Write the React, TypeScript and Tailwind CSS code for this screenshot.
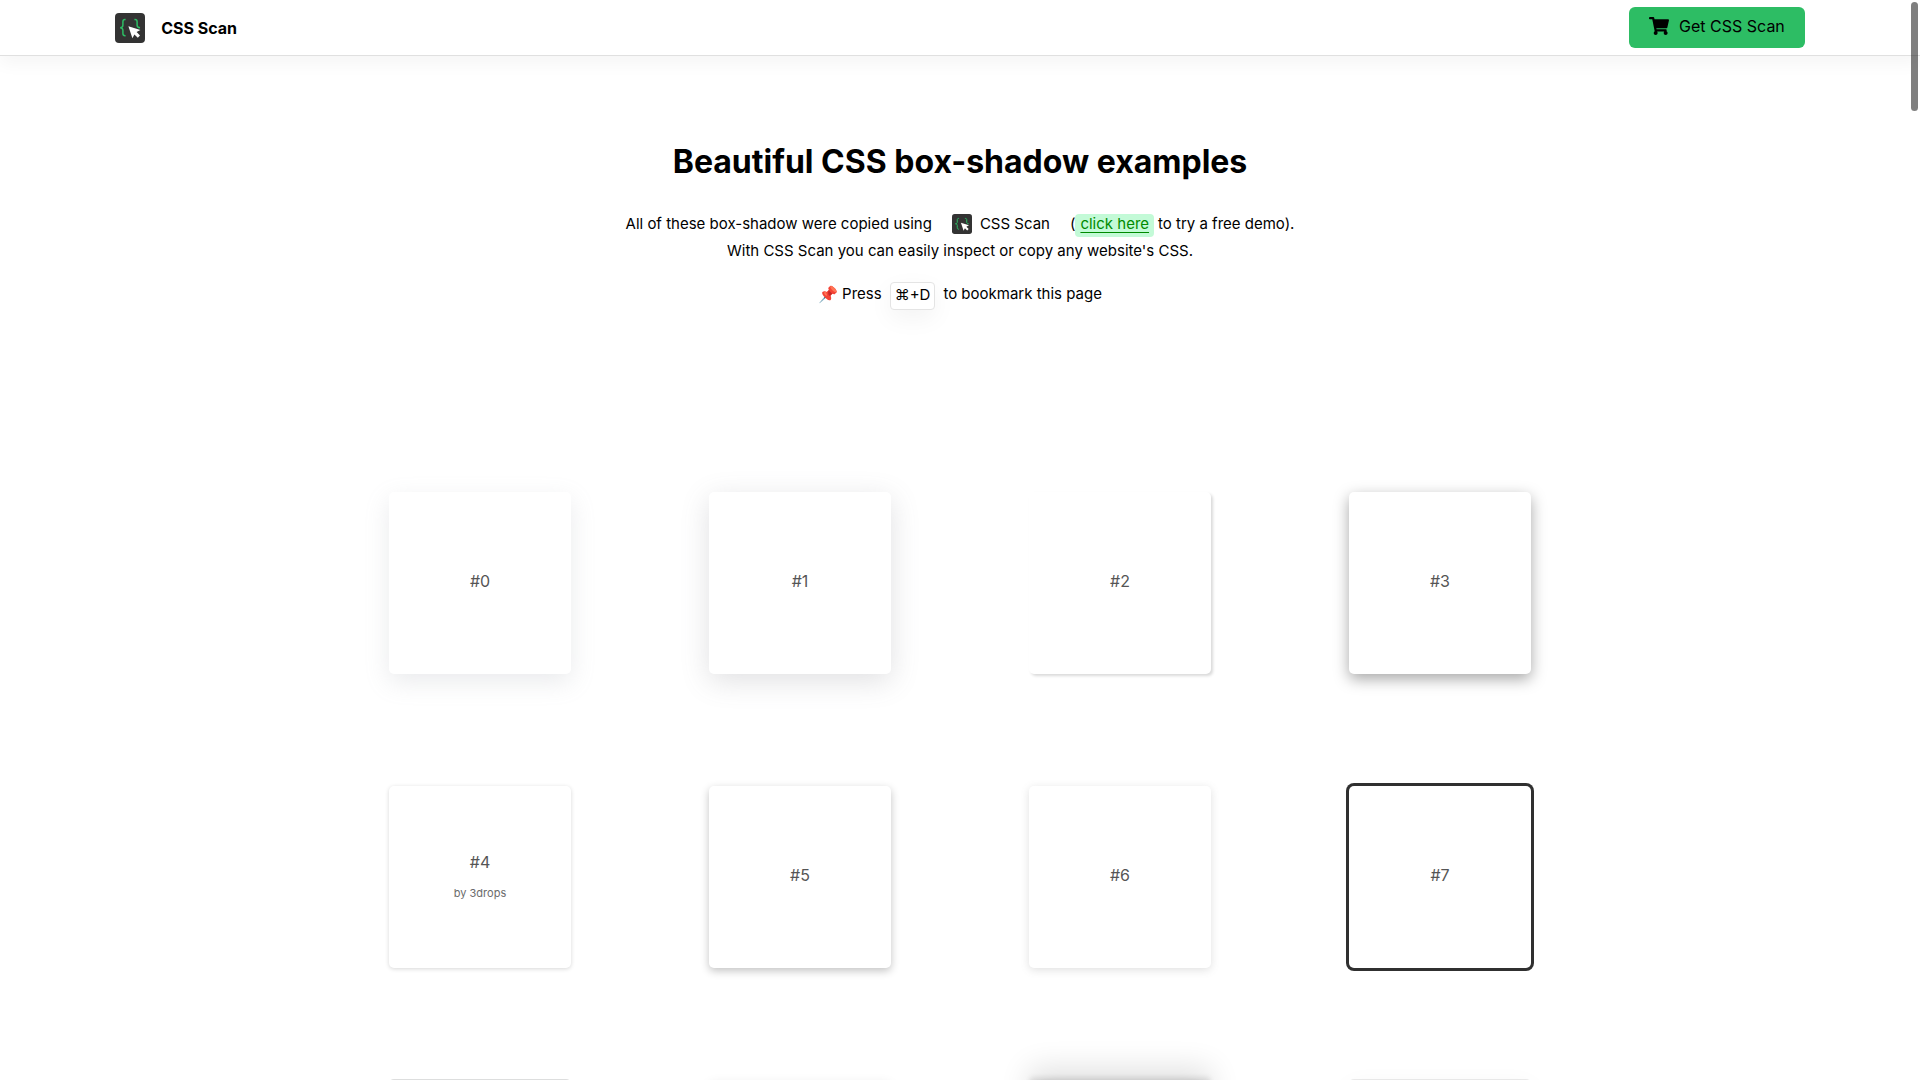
import { FaShoppingCart } from "react-icons/fa";

type Sample = { shadow: string; label?: string; credit?: string };

const samples: Sample[] = [
  { label: "#0", shadow: "shadow-[0px_8px_24px_rgba(149,157,165,0.2)]" },
  { label: "#1", shadow: "shadow-[0px_7px_29px_0px_rgba(100,100,111,0.2)]" },
  { label: "#2", shadow: "shadow-[2px_2px_3px_rgba(0,0,0,0.15)]" },
  { label: "#3", shadow: "shadow-[0px_5px_15px_rgba(0,0,0,0.35)]" },
  { label: "#4", shadow: "shadow-[0px_1px_4px_rgba(0,0,0,0.16)]", credit: "by 3drops" },
  { label: "#5", shadow: "shadow-[0px_3px_8px_rgba(0,0,0,0.24)]" },
  { label: "#6", shadow: "shadow-[0px_2px_8px_0px_rgba(99,99,99,0.2)]" },
  { label: "#7", shadow: "shadow-[0px_0px_0px_3px_rgb(48,48,48)]" },
  { shadow: "shadow-[0px_1px_3px_0px_rgba(0,0,0,0.02),0px_0px_0px_1px_rgba(27,31,35,0.15)]" },
  { shadow: "shadow-[0px_4px_12px_rgba(0,0,0,0.1)]" },
  {
    shadow:
      "shadow-[0px_54px_55px_rgba(0,0,0,0.25),0px_-12px_30px_rgba(0,0,0,0.12),0px_4px_6px_rgba(0,0,0,0.12),0px_12px_13px_rgba(0,0,0,0.17),0px_-3px_5px_rgba(0,0,0,0.09)]",
  },
  { shadow: "shadow-[0px_6px_24px_0px_rgba(0,0,0,0.05),0px_0px_0px_1px_rgba(0,0,0,0.08)]" },
];

function Logo({ className }: { className: string }) {
  return (
    <svg viewBox="0 0 30 30" className={className} aria-hidden="true">
      <rect width="30" height="30" rx="4" fill="#333333" />
      <g fill="none" stroke="#2dbd64" strokeWidth="1.5">
        <path d="M10.6 6.6H10C8.4 6.6 7.9 7.5 7.9 8.8v3.4c0 1.4-.8 2.3-2.7 2.5 1.9.2 2.7 1.1 2.7 2.5v3.4c0 1.3.5 2.2 2.1 2.2h.6" />
        <path d="M19.4 6.6h.6c1.6 0 2.1.9 2.1 2.2v3.4c0 1.4.8 2.3 2.9 2.5" />
      </g>
      <path d="M13.4 13.2 25.4 16.9 21.6 19.1 25 22.6 22.8 24.8 19.4 21.4 17.4 25.2Z" fill="#ffffff" />
    </svg>
  );
}

function Header() {
  return (
    <header className="flex h-14 items-center justify-between border-b border-[#e0e0e0] bg-white px-[6%] shadow-[0px_8px_16px_rgba(0,0,0,0.04)]">
      <a href="#home" className="flex items-center gap-4 text-base font-bold">
        <Logo className="size-[30px]" />
        CSS Scan
      </a>
      <button className="flex h-[41px] items-center gap-2.5 rounded-md bg-[#2dbd64] px-5 pb-1 text-base">
        <FaShoppingCart className="h-[18px] w-5" aria-hidden="true" />
        Get CSS Scan
      </button>
    </header>
  );
}

function Intro() {
  return (
    <section className="flex flex-col items-center px-4 pt-[86px] text-center leading-[27px]">
      <h1 className="text-[32px] leading-10 font-bold">Beautiful CSS box-shadow examples</h1>
      <p className="mt-7">
        <span className="flex items-center justify-center">
          All of these box-shadow were copied using
          <a href="#css-scan" className="mx-5 flex items-center gap-2">
            <Logo className="size-5" />
            CSS Scan
          </a>
          (
          <a
            href="#demo"
            className="mt-1 mr-1 rounded bg-[#c3fad7] px-[5px] pb-1 leading-[19px] text-[#008a00] underline underline-offset-3"
          >
            click here
          </a>
          to try a free demo).
        </span>
        With CSS Scan you can easily inspect or copy any website's CSS.
      </p>
      <p className="mt-[18px] flex items-start leading-6">
        <span className="mr-1 text-base leading-6">📌</span>
        Press
        <kbd className="mx-2 flex h-7 items-start rounded border border-[#e4e4e4] bg-white px-1 font-[Inter,sans-serif] shadow-[0px_8px_24px_rgba(0,0,0,0.05)]">
          ⌘+D
        </kbd>
        to bookmark this page
      </p>
    </section>
  );
}

function ShadowCard({ index, sample }: { index: number; sample: Sample }) {
  return (
    <button
      aria-label={`Copy box-shadow ${index}`}
      className={`flex size-[182px] flex-col items-center justify-center gap-[11px] rounded-[5px] bg-white pb-1 text-base leading-6 text-[#555555] ${sample.shadow}`}
    >
      {sample.label && <span>{sample.label}</span>}
      {sample.credit && <span className="text-[11px] leading-4 text-[#6b6b6b]">{sample.credit}</span>}
    </button>
  );
}

export default function App() {
  return (
    <div className="h-screen overflow-hidden bg-white font-[Inter,sans-serif] text-[15px] text-black">
      <Header />
      <main>
        <Intro />
        <section
          aria-label="Box shadows"
          className="mx-auto mt-[182px] grid max-w-7xl grid-cols-4 justify-items-center gap-y-28"
        >
          {samples.map((sample, index) => (
            <ShadowCard key={index} index={index} sample={sample} />
          ))}
        </section>
      </main>
      <div aria-hidden="true" className="fixed top-0.5 right-0.5 h-[109px] w-[7px] rounded-full bg-black/50" />
    </div>
  );
}
